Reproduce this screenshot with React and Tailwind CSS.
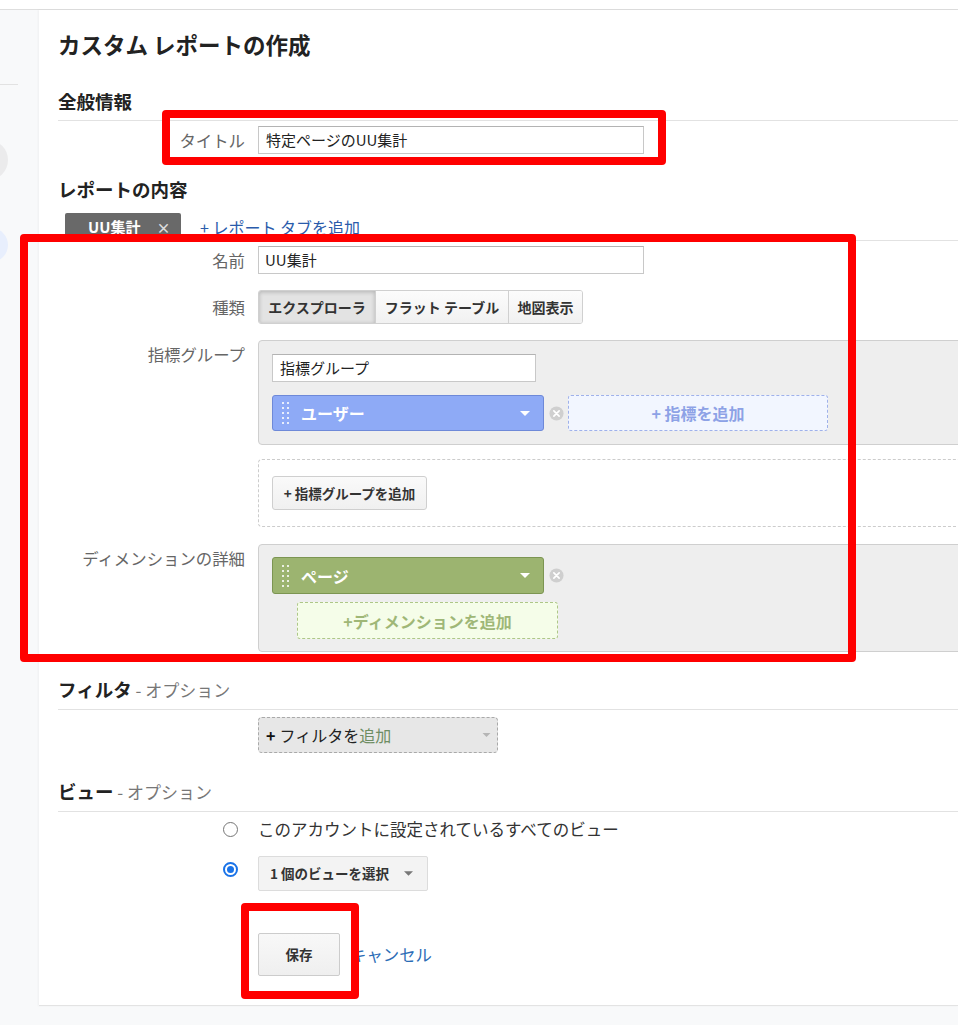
import React from "react";

function XCircle() {
  return (
    <svg width="15" height="15" viewBox="0 0 16 16" className="shrink-0">
      <circle cx="8" cy="8" r="7.5" fill="#cfcfcf" />
      <path d="M5.2 5.2 L10.8 10.8 M10.8 5.2 L5.2 10.8" stroke="#ffffff" strokeWidth="1.8" strokeLinecap="round" />
    </svg>
  );
}

function Handle() {
  return (
    <div className="grid grid-cols-2 gap-x-[3px] gap-y-[3px] mr-[12px]">
      {Array.from({ length: 10 }).map((_, i) => (
        <span key={i} className="block w-[2px] h-[2px] bg-white/80" />
      ))}
    </div>
  );
}

function Caret({ color = "#ffffff", w = 10, h = 5 }) {
  return (
    <svg width={w} height={h} viewBox="0 0 10 5" className="shrink-0">
      <path d="M0 0 L10 0 L5 5 Z" fill={color} />
    </svg>
  );
}

function Row({ label, children, align = "items-center", labelClass = "" }) {
  return (
    <div className={`flex ${align}`}>
      <div className={`w-[200px] shrink-0 pr-[13px] text-right text-[16.4px] leading-[24px] text-[#666666] ${labelClass}`}>
        {label}
      </div>
      <div className="min-w-0">{children}</div>
    </div>
  );
}

function SectionHeader({ bold, rest, className = "" }) {
  return (
    <div className={`border-b border-[#e2e2e2] pb-[6px] text-[18.5px] leading-[26px] ${className}`}>
      <span className="font-bold text-[#222222]">{bold}</span>
      {rest && <span className="text-[#777777] text-[17px]"> - {rest}</span>}
    </div>
  );
}

export default function App() {
  return (
    <div className="relative min-h-[1025px] overflow-hidden bg-[#f8f9fa] font-['Noto_Sans_CJK_JP','Noto_Sans',sans-serif] text-[#333333]">
      <div className="h-[10px] bg-white border-b border-[#dedede]" />
      <div className="flex">
        <aside className="w-[39px] shrink-0 overflow-hidden">
          <div className="h-[74px]" />
          <div className="w-[18px] h-px bg-[#e2e2e2]" />
          <div className="mt-[55px] -ml-[32px] w-[40px] h-[40px] rounded-full bg-[#ebebec]" />
          <div className="mt-[48px] -ml-[26px] w-[34px] h-[34px] rounded-full bg-[#e8effd]" />
        </aside>

        <main className="flex-1 min-w-0 overflow-hidden bg-white border-b border-[#e3e3e3] pl-[19px] pt-[19px] pb-[29px] shadow-[-1px_0_2px_rgba(0,0,0,0.04)]">
          <h1 className="text-[22.5px] leading-[30px] font-bold text-[#222222]">カスタム レポートの作成</h1>

          <SectionHeader bold="全般情報" className="mt-[29px]" />

          <div className="mt-[5px]">
            <Row label="タイトル">
              <div className="w-[386px] h-[28px] border border-[#c8c8c8] border-t-[#b3b3b3] px-[7px] text-[15px] leading-[26px] text-[#222222]">
                特定ページのUU集計
              </div>
            </Row>
          </div>

          <div className="mt-[22px] text-[18.5px] leading-[26px] font-bold text-[#222222]">レポートの内容</div>

          <div className="mt-[11px] flex items-end border-b border-[#e2e2e2]">
            <div className="ml-[7px] w-[116px] h-[27px] rounded-t-[2px] bg-[#696969] flex items-center pl-[23px] text-white">
              <span className="text-[15px] font-bold leading-[20px]">UU集計</span>
              <span className="ml-[16px] text-[14px] text-[#dddddd] font-bold leading-[20px]">×</span>
            </div>
            <div className="ml-[19px] self-center text-[16px] leading-[22px] text-[#2a5bab]">+ レポート タブを追加</div>
          </div>

          <div className="mt-[5px]">
            <Row label="名前">
              <div className="w-[386px] h-[28px] border border-[#c8c8c8] border-t-[#b3b3b3] px-[6px] text-[15px] leading-[26px] text-[#222222]">
                UU集計
              </div>
            </Row>
          </div>

          <div className="mt-[16px]">
            <Row label="種類">
              <div className="flex h-[34px] rounded-[3px] border border-[#d0d0d0] overflow-hidden text-[14px] font-bold text-[#333333]">
                <div className="w-[116px] flex items-center justify-center bg-[#e3e3e3] shadow-[inset_0_1px_4px_rgba(0,0,0,0.22)]">エクスプローラ</div>
                <div className="w-[133px] flex items-center justify-center bg-gradient-to-b from-[#fcfcfc] to-[#f1f1f1] border-l border-[#d0d0d0]">フラット テーブル</div>
                <div className="w-[74px] flex items-center justify-center bg-gradient-to-b from-[#fcfcfc] to-[#f1f1f1] border-l border-[#d0d0d0]">地図表示</div>
              </div>
            </Row>
          </div>

          <div className="mt-[16px]">
            <Row label="指標グループ" align="items-start" labelClass="pt-[2px]">
              <div className="w-[720px] h-[105px] rounded-l-[4px] border border-[#cfcfcf] bg-[#eeeeee] pl-[13px] pt-[13px]">
                <div className="w-[264px] h-[28px] border border-[#c8c8c8] border-t-[#b3b3b3] bg-white px-[7px] text-[15px] leading-[26px] text-[#222222]">
                  指標グループ
                </div>
                <div className="mt-[13px] flex items-center">
                  <div className="w-[272px] h-[36px] rounded-[3px] border border-[#6e89d8] bg-[#8eaaf6] flex items-center pl-[9px] pr-[13px]">
                    <Handle />
                    <span className="text-[16px] font-bold text-white leading-[22px]">ユーザー</span>
                    <span className="flex-1" />
                    <Caret />
                  </div>
                  <div className="ml-[5px]"><XCircle /></div>
                  <div className="ml-[4px] w-[260px] h-[36px] rounded-[3px] border border-dashed border-[#9fb1ea] bg-[#f2f6ff] flex items-center justify-center text-[16px] font-bold text-[#8da2e6]">
                    + 指標を追加
                  </div>
                </div>
              </div>
            </Row>
          </div>

          <div className="mt-[14px]">
            <Row label="">
              <div className="w-[720px] h-[68px] rounded-l-[4px] border border-dashed border-[#cccccc] pl-[13px] pt-[16px]">
                <div className="w-[155px] h-[34px] rounded-[3px] border border-[#cfcfcf] bg-gradient-to-b from-[#fafafa] to-[#f0f0f0] flex items-center justify-center text-[13.5px] font-bold text-[#333333]">
                  + 指標グループを追加
                </div>
              </div>
            </Row>
          </div>

          <div className="mt-[17px]">
            <Row label="ディメンションの詳細" align="items-start" labelClass="pt-[2px]">
              <div className="w-[720px] h-[108px] rounded-l-[4px] border border-[#cfcfcf] bg-[#eeeeee] pl-[13px] pt-[12px]">
                <div className="flex items-center">
                  <div className="w-[272px] h-[37px] rounded-[3px] border border-[#7c9552] bg-[#9cb470] flex items-center pl-[9px] pr-[13px]">
                    <Handle />
                    <span className="text-[16px] font-bold text-white leading-[22px]">ページ</span>
                    <span className="flex-1" />
                    <Caret />
                  </div>
                  <div className="ml-[5px]"><XCircle /></div>
                </div>
                <div className="mt-[8px] ml-[25px] w-[261px] h-[37px] rounded-[3px] border border-dashed border-[#aec788] bg-[#f5fde9] flex items-center justify-center text-[16px] font-bold text-[#9fb777]">
                  +ディメンションを追加
                </div>
              </div>
            </Row>
          </div>

          <SectionHeader bold="フィルタ" rest="オプション" className="mt-[24px]" />

          <div className="mt-[7px]">
            <Row label="">
              <div className="w-[240px] h-[36px] rounded-[4px] border border-dashed border-[#a9a9a9] bg-[#e7e7e7] flex items-center pl-[7px] pr-[6px] text-[16px]">
                <span className="font-bold text-[#111111]">+</span>
                <span className="ml-[4px] text-[#222222]">フィルタを</span>
                <span className="text-[#6e8d63]">追加</span>
                <span className="flex-1" />
                <Caret color="#b5b5b5" w={9} h={4} />
              </div>
            </Row>
          </div>

          <SectionHeader bold="ビュー" rest="オプション" className="mt-[25px]" />

          <div className="mt-[5px] flex items-center">
            <div className="w-[200px] shrink-0 pr-[20px] flex justify-end">
              <span className="block w-[15px] h-[15px] rounded-full border-[1.5px] border-[#767676] bg-white" />
            </div>
            <div className="text-[16.5px] leading-[24px] text-[#333333]">このアカウントに設定されているすべてのビュー</div>
          </div>

          <div className="mt-[15px] flex items-start">
            <div className="w-[200px] shrink-0 pr-[20px] pt-[6px] flex justify-end">
              <span className="flex items-center justify-center w-[15px] h-[15px] rounded-full border-[2px] border-[#1a73e8] bg-white">
                <span className="block w-[7px] h-[7px] rounded-full bg-[#1a73e8]" />
              </span>
            </div>
            <div className="w-[170px] h-[35px] rounded-[2px] border border-[#dcdcdc] bg-[#f3f3f3] flex items-center pl-[11px] pr-[14px] text-[13.5px] font-bold text-[#333333]">
              <span>1 個のビューを選択</span>
              <span className="flex-1" />
              <Caret color="#777777" w={9} h={5} />
            </div>
          </div>

          <div className="mt-[42px]">
            <Row label="">
              <div className="flex items-center">
                <div className="w-[82px] h-[43px] rounded-[2px] border border-[#cccccc] bg-gradient-to-b from-[#f8f8f8] to-[#efefef] flex items-center justify-center text-[13.5px] font-bold text-[#333333]">
                  保存
                </div>
                <div className="ml-[10px] text-[16.4px] text-[#2b6cb6]">キャンセル</div>
              </div>
            </Row>
          </div>
        </main>
      </div>

      <div className="absolute left-[162px] top-[110px] w-[504px] h-[55px] rounded-[4px] border-[8px] border-[#ff0000] pointer-events-none" />
      <div className="absolute left-[20px] top-[234px] w-[836px] h-[428px] rounded-[4px] border-[8px] border-[#ff0000] pointer-events-none" />
      <div className="absolute left-[241px] top-[903px] w-[118px] h-[96px] rounded-[4px] border-[8px] border-[#ff0000] pointer-events-none" />
    </div>
  );
}
